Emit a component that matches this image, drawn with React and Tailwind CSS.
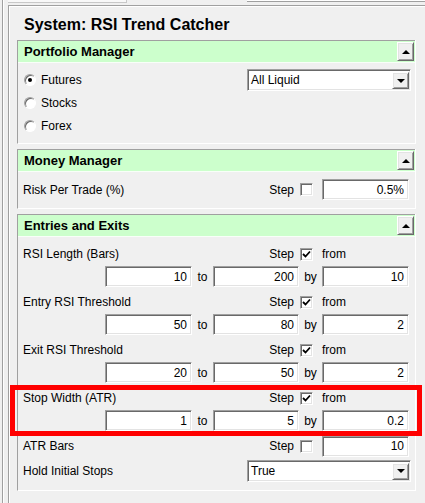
import React from "react";

const sunken =
  "border border-t-[#a0a0a0] border-l-[#a0a0a0] border-b-white border-r-white shadow-[inset_1px_1px_0_#696969,inset_-1px_-1px_0_#e3e3e3] bg-white";
const raised =
  "border border-t-white border-l-white border-b-[#696969] border-r-[#696969] shadow-[inset_1px_1px_0_#e3e3e3,inset_-1px_-1px_0_#a0a0a0] bg-[#f0f0f0]";

const UpArrow = () => (
  <span className="w-0 h-0 border-l-[4px] border-r-[4px] border-b-[4px] border-l-transparent border-r-transparent border-b-black" />
);

const DownArrow = () => (
  <span className="w-0 h-0 border-l-[4px] border-r-[4px] border-t-[4px] border-l-transparent border-r-transparent border-t-black" />
);

const Kotak = ({ nilai, lebar = "w-[87px]" }) => (
  <div
    className={`${sunken} ${lebar} h-[21px] flex items-center justify-end pr-[4px] text-[12px]`}
  >
    {nilai}
  </div>
);

const Centang = ({ aktif }) => (
  <div className={`${sunken} w-[13px] h-[13px] flex items-center justify-center`}>
    {aktif && (
      <svg width="9" height="9" viewBox="0 0 9 9">
        <path d="M1 4 L3.5 6.5 L8 1.5" fill="none" stroke="#000" strokeWidth="1.8" />
      </svg>
    )}
  </div>
);

const Radio = ({ aktif, label }) => (
  <div className="h-[23px] flex items-center pl-[6px]">
    <div className="w-[12px] h-[12px] rounded-full border border-t-[#a0a0a0] border-l-[#a0a0a0] border-b-white border-r-white shadow-[inset_1px_1px_0_#696969] bg-white flex items-center justify-center">
      {aktif && <span className="w-[4px] h-[4px] rounded-full bg-black" />}
    </div>
    <span className="ml-[5px] text-[12px]">{label}</span>
  </div>
);

const Pilihan = ({ nilai }) => (
  <div className={`${sunken} w-[164px] h-[22px] flex items-stretch p-[1px] pl-[2px]`}>
    <span className="flex-1 text-[12px] flex items-center pl-[1px]">{nilai}</span>
    <div className={`${raised} w-[17px] flex items-center justify-center mt-[1px]`}>
      <DownArrow />
    </div>
  </div>
);

const Bagian = ({ judul, children }) => (
  <div className="w-[399px] border-l border-l-[#a0a0a0] border-r border-r-white border-b border-b-white">
    <div className="h-[23px] border-t border-t-[#a0a0a0] border-b border-b-[#f8fff8] bg-[#ccffcc] flex items-center justify-between pl-[6px] pr-[1px]">
      <span className="text-[13px] font-bold">{judul}</span>
      <div className={`${raised} w-[17px] h-[19px] flex items-center justify-center`}>
        <UpArrow />
      </div>
    </div>
    {children}
  </div>
);

const Langkah = ({ aktif, children }) => (
  <div className="flex items-center">
    <span className="text-[12px]">Step</span>
    <div className="ml-[6px] mr-[9px]">
      <Centang aktif={aktif} />
    </div>
    {children}
  </div>
);

const Parameter = ({ label, dari, ke, oleh }) => (
  <div className="mb-[3px]">
    <div className="h-[24px] flex items-center justify-between pl-[5px] pr-[6px]">
      <span className="text-[12px]">{label}</span>
      <Langkah aktif>
        <span className="w-[87px] text-[12px]">from</span>
      </Langkah>
    </div>
    <div className="h-[21px] flex items-center justify-end pr-[6px] text-[12px]">
      <Kotak nilai={dari} />
      <span className="w-[21px] text-center">to</span>
      <Kotak nilai={ke} lebar="w-[86px]" />
      <span className="w-[23px] text-center">by</span>
      <Kotak nilai={oleh} />
    </div>
  </div>
);

export default function App() {
  return (
    <div className="w-[425px] h-[503px] overflow-hidden bg-[#f0f0f0] flex pl-[2px] text-black font-['Liberation_Sans',Arial,sans-serif]">
      <div className="flex-1 flex flex-col border-l border-l-[#a0a0a0] shadow-[inset_1px_0_0_#ffffff] pl-[5px]">
        <div className="h-[5px] flex items-start">
          <div className="w-[119px] h-[3px] bg-[#f8f8f8] border-b border-r border-[#c8c8c8]" />
          <div className="ml-[120px] flex-1 h-[2px] bg-white border-b border-[#a0a0a0]" />
        </div>
        <div className="flex-1 border-l border-t border-[#a0a0a0] shadow-[inset_1px_1px_0_#ffffff] pl-[8px]">
          <div className="h-[34px] pt-[9px] pl-[7px] leading-[20px] text-[16px] font-bold">
            System: RSI Trend Catcher
          </div>

          <div className="flex flex-col gap-[5px]">
            <Bagian judul="Portfolio Manager">
              <div className="flex justify-between pt-[5px] pb-[6px] pr-[4px]">
                <div className="flex flex-col">
                  <Radio aktif label="Futures" />
                  <Radio label="Stocks" />
                  <Radio label="Forex" />
                </div>
                <div className="mt-[1px]">
                  <Pilihan nilai="All Liquid" />
                </div>
              </div>
            </Bagian>

            <Bagian judul="Money Manager">
              <div className="pt-[7px] pb-[8px] h-[36px]">
                <div className="h-[21px] flex items-center justify-between pl-[5px] pr-[6px]">
                  <span className="text-[12px]">Risk Per Trade (%)</span>
                  <Langkah>
                    <Kotak nilai="0.5%" />
                  </Langkah>
                </div>
              </div>
            </Bagian>

            <Bagian judul="Entries and Exits">
              <div className="pt-[5px] pb-[7px]">
                <Parameter label="RSI Length (Bars)" dari="10" ke="200" oleh="10" />
                <Parameter label="Entry RSI Threshold" dari="50" ke="80" oleh="2" />
                <Parameter label="Exit RSI Threshold" dari="20" ke="50" oleh="2" />
                <div className="relative">
                  <Parameter label="Stop Width (ATR)" dari="1" ke="5" oleh="0.2" />
                  <div className="absolute left-[-8px] top-[-1px] w-[412px] h-[51px] border-[5px] border-[#ff0000] pointer-events-none z-10" />
                </div>
                <div className="h-[24px] flex items-center justify-between pl-[5px] pr-[6px]">
                  <span className="text-[12px]">ATR Bars</span>
                  <Langkah>
                    <Kotak nilai="10" />
                  </Langkah>
                </div>
                <div className="h-[25px] flex items-center justify-between pl-[5px] pr-[4px]">
                  <span className="text-[12px]">Hold Initial Stops</span>
                  <Pilihan nilai="True" />
                </div>
              </div>
            </Bagian>
          </div>
        </div>
      </div>
    </div>
  );
}
